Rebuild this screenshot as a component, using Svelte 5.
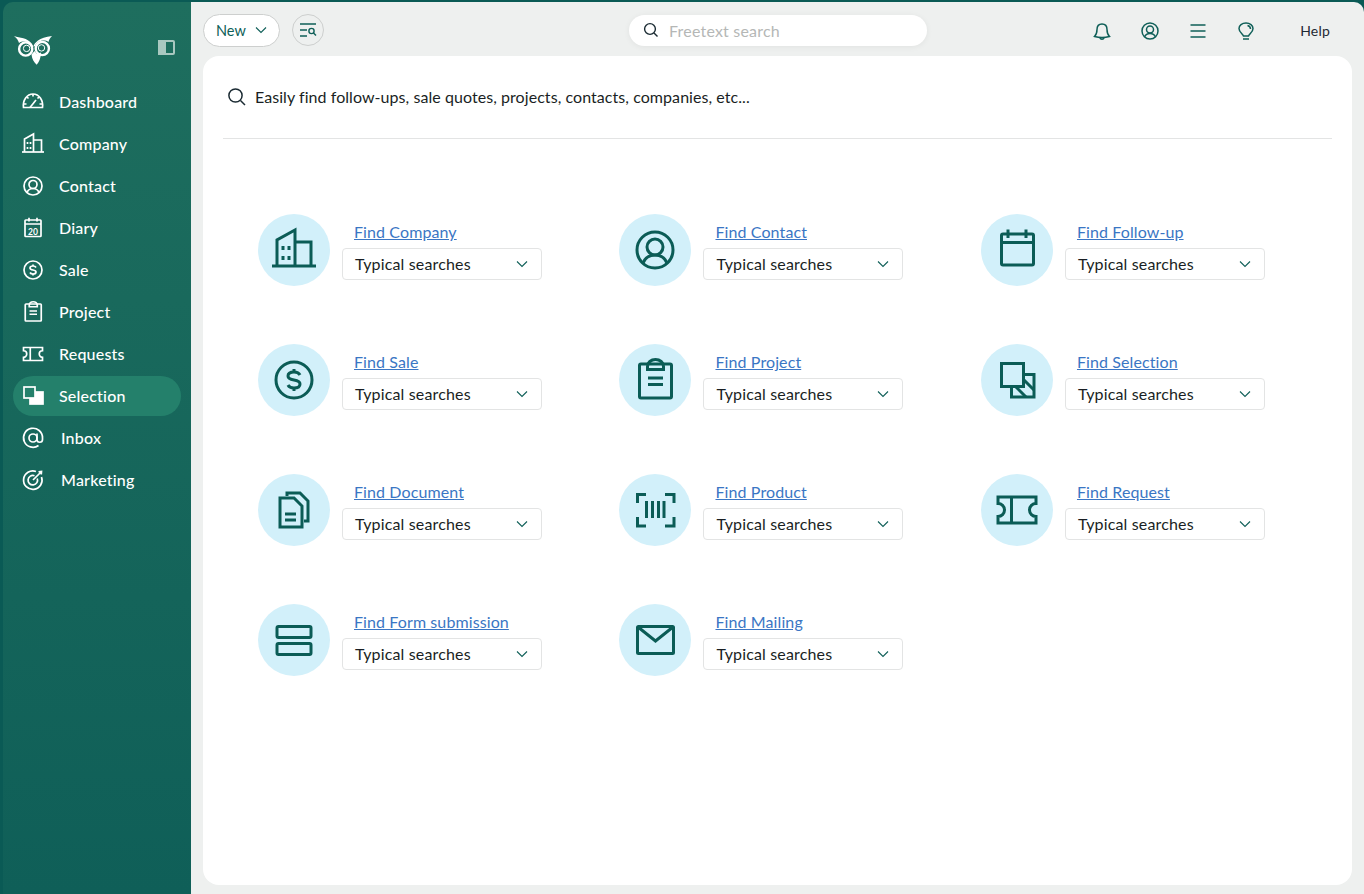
<script>
  const shapes = {
    gauge: `<path d="M5 35 C3 20 12 8 24 8 S45 20 43 35 Z"/><path d="M18 35 L30 20"/><path d="M24 8 V13 M12 14 L15 17 M36 14 L33 17 M37 28 H42 M6 28 H11"/>`,
    company: `<path d="M2 40 H46"/><path d="M7 40 V14 L25 4 V40"/><path d="M25 16 H41 V40"/><path d="M13 20 V24 M19 20 V24 M13 30 V34 M19 30 V34"/>`,
    contact: `<circle cx="24" cy="24" r="18"/><circle cx="24" cy="21" r="8"/><path d="M12 37 C14 32 18 29 24 29 S34 32 36 37"/>`,
    calendar: `<rect x="8.5" y="8" width="32" height="31" rx="1.5"/><path d="M8.5 16.5 H40.5 M15 3.5 V12 M33 3.5 V12"/>`,
    diary: `<rect x="8" y="8" width="32" height="33" rx="1.5"/><path d="M8 16 H40 M16 3.5 V11 M32 3.5 V11"/><text x="24" y="37" text-anchor="middle" font-family="Lato, sans-serif" font-weight="700" font-size="17" fill="currentColor" stroke="none">20</text>`,
    sale: `<circle cx="24" cy="24" r="18"/><path d="M30 19 C29 17 27 16 24 16 C20.5 16 18 17.5 18 20 C18 22.5 20.5 23.4 24 24 S30 25.5 30 28 C30 30.5 27.5 32 24 32 C20.5 32 19 31 18 29"/><path d="M24 13 V16 M24 32 V35"/>`,
    project: `<rect x="8.5" y="8" width="32" height="34" rx="1.5"/><path d="M16.5 13.5 V10.5 C16.5 6.5 20 3.5 24.5 3.5 S32.5 6.5 32.5 10.5 V13.5 Z"/><path d="M17 22 H32 M17 28.5 H32"/>`,
    selection: `<path d="M31 18.5 H41 V41 H18.5 V31"/><rect x="8.5" y="7.5" width="22" height="23"/><path d="M23 31 L33 41 M31 24 L41 34"/>`,
    selectionFilled: `<rect x="18" y="16" width="26" height="24" fill="currentColor"/><rect x="6" y="6" width="22" height="22" fill="#24806b"/>`,
    document: `<path d="M17 10 V7 H30 L38 15 V35 H34"/><path d="M10 12 H24 L32 20 V41 H10 Z"/><path d="M15 28 H26 M15 34 H26"/>`,
    product: `<path d="M15 8.5 H6.5 V17 M34 8.5 H43 V17 M6.5 31 V40 H15 M43 31 V40 H34"/><path d="M15.5 15 V32 M21.5 15 V32 M27.5 15 V32 M33 15 V32"/>`,
    request: `<path d="M5 11 H43 V17.5 A6.5 6.5 0 0 0 43 30.5 V37 H5 V30.5 A6.5 6.5 0 0 0 5 17.5 Z"/><path d="M18.5 11 V37"/>`,
    form: `<rect x="7" y="10.5" width="34" height="11" rx="1.5"/><rect x="7" y="27.5" width="34" height="11" rx="1.5"/>`,
    mail: `<rect x="6.5" y="10.5" width="36" height="27" rx="1"/><path d="M7 11 L24.5 25 L42 11"/>`,
    inbox: `<circle cx="24" cy="24" r="8"/><path d="M32 15 V27 A5.5 5.5 0 0 0 43 27 V24 A19 19 0 1 0 35 39"/>`,
    marketing: `<path d="M30 7 A18.5 18.5 0 1 0 41 18"/><path d="M27 15.5 A9.5 9.5 0 1 0 32.5 21"/><path d="M24 24 L41 7 M35 7.5 L41 7 L40.5 13"/>`
  };

  const nav = [
    { label: 'Dashboard', icon: 'gauge' },
    { label: 'Company', icon: 'company' },
    { label: 'Contact', icon: 'contact' },
    { label: 'Diary', icon: 'diary' },
    { label: 'Sale', icon: 'sale' },
    { label: 'Project', icon: 'project' },
    { label: 'Requests', icon: 'request' },
    { label: 'Selection', icon: 'selectionFilled', active: true },
    { label: 'Inbox', icon: 'inbox', wide: true },
    { label: 'Marketing', icon: 'marketing', wide: true }
  ];

  const finders = [
    { label: 'Find Company', icon: 'company' },
    { label: 'Find Contact', icon: 'contact' },
    { label: 'Find Follow-up', icon: 'calendar' },
    { label: 'Find Sale', icon: 'sale' },
    { label: 'Find Project', icon: 'project' },
    { label: 'Find Selection', icon: 'selection' },
    { label: 'Find Document', icon: 'document' },
    { label: 'Find Product', icon: 'product' },
    { label: 'Find Request', icon: 'request' },
    { label: 'Find Form submission', icon: 'form' },
    { label: 'Find Mailing', icon: 'mail' }
  ];
</script>

<div class="app">
  <aside class="sidebar">
    <div class="brand">
      <svg class="owl" width="38" height="30" viewBox="0 0 38 30" aria-label="Logo">
        <path class="owl-fill" d="M0 1 C6 3.5 13 2 18 9 C18.6 10 19 11 19.3 12 C20 8 25 2.5 38 1 C35.5 3.5 35 5 34.5 7 C31 4.5 24 5 21 11 L18 12 C15 6 9 5.5 5 8 C4 5 3 3.5 0 1 Z" />
        <circle class="owl-ring" cx="11.7" cy="14" r="6.6" />
        <circle class="owl-ring" cx="28.3" cy="13.5" r="6.6" />
        <circle class="owl-thin" cx="12.6" cy="13.4" r="3.2" />
        <circle class="owl-thin" cx="27.5" cy="12.9" r="3.2" />
        <path class="owl-fill" d="M17.5 19.5 L20.5 16 L23 19 L27 17.5 C27 23 25 27 22.7 29.7 C20 27.5 18 24 17.5 19.5 Z" />
      </svg>
      <svg class="toggle" width="17" height="15" viewBox="0 0 17 15">
        <rect x="0" y="0" width="8" height="15" fill="#a9c8c0" />
        <rect x="1" y="1" width="15" height="13" rx="1" fill="none" stroke="#a9c8c0" stroke-width="2" />
      </svg>
    </div>
    <nav class="nav">
      {#each nav as item}
        <a class="nav-item" class:active={item.active} class:wide={item.wide} href="#top">
          <svg class="nav-icon" viewBox="0 0 48 48">{@html shapes[item.icon]}</svg>
          <span>{item.label}</span>
        </a>
      {/each}
    </nav>
  </aside>

  <main class="main">
    <header class="topbar">
      <div class="top-left">
        <button class="new-btn">
          New
          <svg width="12" height="8" viewBox="0 0 12 8"><path d="M1 1.5 L6 6.5 L11 1.5" /></svg>
        </button>
        <button class="round-btn" aria-label="Search list">
          <svg width="18" height="14" viewBox="0 0 18 14">
            <path d="M1 1 H17 M1 7 H8 M1 13 H8" />
            <circle cx="12.5" cy="8" r="2.6" />
            <path d="M14.5 10 L17 12.5" />
          </svg>
        </button>
      </div>
      <div class="search">
        <svg class="search-icon" width="16" height="16" viewBox="0 0 16 16">
          <circle cx="7" cy="7" r="5.4" />
          <path d="M11 11 L14.5 14.5" />
        </svg>
        <span>Freetext search</span>
      </div>
      <div class="top-right">
        <svg class="top-icon" viewBox="0 0 24 24">
          <path d="M4.5 17.5 C6 16 7 14 7 10.5 C7 7 9 5 12 5 S17 7 17 10.5 C17 14 18 16 19.5 17.5 C15.5 18.7 8.5 18.7 4.5 17.5 Z" />
          <path d="M10 19 C10.5 20.6 13.5 20.6 14 19" />
        </svg>
        <svg class="top-icon" viewBox="0 0 24 24">
          <circle cx="12" cy="12" r="8" />
          <circle cx="12" cy="10.5" r="3.5" />
          <path d="M6.5 18 C7.5 15.5 9.5 14.5 12 14.5 S16.5 15.5 17.5 18" />
        </svg>
        <svg class="top-icon" viewBox="0 0 24 24">
          <path d="M4.5 6 H19.5 M4.5 12 H19.5 M4.5 18 H19.5" />
        </svg>
        <svg class="top-icon" viewBox="0 0 24 24">
          <path d="M9.5 17 C9 15 5 13.5 5 9.5 C5 6.5 8 4 12 4 S19 6.5 19 9.5 C19 13.5 15 15 14.5 17 Z" />
          <path d="M9 20 H15 M13.5 6.5 C15.5 7 16.5 8.5 16.5 10" />
        </svg>
        <span class="help">Help</span>
      </div>
    </header>

    <section class="card">
      <div class="card-head">
        <svg class="head-icon" width="20" height="20" viewBox="0 0 20 20">
          <circle cx="8.5" cy="8.5" r="6.6" />
          <path d="M13.5 13.5 L18 18" />
        </svg>
        <span>Easily find follow-ups, sale quotes, projects, contacts, companies, etc...</span>
      </div>
      <div class="grid">
        {#each finders as finder}
          <div class="finder">
            <div class="bubble">
              <svg class="big-icon" viewBox="0 0 48 48">{@html shapes[finder.icon]}</svg>
            </div>
            <div class="finder-body">
              <a class="finder-link" href="#top">{finder.label}</a>
              <div class="dropdown">
                <span>Typical searches</span>
                <svg width="12" height="8" viewBox="0 0 12 8"><path d="M1 1.5 L6 6.5 L11 1.5" /></svg>
              </div>
            </div>
          </div>
        {/each}
      </div>
    </section>
  </main>
</div>

<style>
  :global(body) {
    margin: 0;
    background: #0a5a55;
    font-family: Lato, "Liberation Sans", sans-serif;
  }

  .app {
    display: flex;
    height: 892px;
    padding: 2px 0 0 3px;
    background: #0a5a55;
    overflow: hidden;
  }

  .sidebar {
    width: 188px;
    flex: none;
    border-top-left-radius: 10px;
    background: linear-gradient(180deg, #1e6e5e 0%, #0f5f58 100%);
  }

  .brand {
    display: flex;
    align-items: center;
    justify-content: space-between;
    height: 80px;
    padding: 10px 16px 0 11px;
    box-sizing: border-box;
  }

  .owl { margin-top: 6px; }
  .owl-fill { fill: #fff; }
  .owl-ring { fill: none; stroke: #fff; stroke-width: 2.4; }
  .owl-thin { fill: none; stroke: #fff; stroke-width: 1; }

  .nav {
    display: flex;
    flex-direction: column;
    gap: 2px;
    padding: 0 10px;
  }

  .nav-item {
    display: flex;
    align-items: center;
    gap: 14px;
    height: 40px;
    padding-left: 8px;
    border-radius: 20px;
    color: #fff;
    font-size: 16px;
    font-weight: 500;
    letter-spacing: 0.2px;
    text-decoration: none;
  }

  .nav-item span { margin-bottom: 2px; }
  .nav-item.active { background: #24806b; }
  .nav-item.wide { gap: 16px; }

  .nav-icon {
    width: 24px;
    height: 24px;
    flex: none;
    color: #fff;
    fill: none;
    stroke: currentColor;
    stroke-width: 3.4;
  }

  .main {
    flex: 1;
    display: flex;
    flex-direction: column;
    min-width: 0;
    padding: 0 12px 9px;
    border-top-right-radius: 10px;
    background: #eef0ef;
  }

  .topbar {
    display: grid;
    grid-template-columns: 426px 298px 1fr;
    align-items: center;
    height: 54px;
    padding-top: 2px;
    box-sizing: border-box;
    flex: none;
  }

  .top-left {
    display: flex;
    align-items: center;
    gap: 12px;
  }

  button {
    font-family: inherit;
    cursor: pointer;
  }

  .new-btn {
    display: flex;
    align-items: center;
    gap: 9px;
    width: 77px;
    height: 33px;
    padding: 0 0 0 12px;
    border: 1px solid #cdcfce;
    border-radius: 17px;
    background: #fff;
    color: #0f5f58;
    font-size: 14.5px;
  }

  .new-btn path, .dropdown path {
    fill: none;
    stroke: #0f5f58;
    stroke-width: 1.1;
  }

  .round-btn {
    display: flex;
    align-items: center;
    justify-content: center;
    width: 32px;
    height: 32px;
    padding: 0;
    border: 1px solid #cdcfce;
    border-radius: 50%;
    background: #eef0ef;
  }

  .round-btn path, .round-btn circle {
    fill: none;
    stroke: #0f5f58;
    stroke-width: 1.4;
  }

  .search {
    display: flex;
    align-items: center;
    gap: 10px;
    height: 31px;
    padding-left: 14px;
    border-radius: 16px;
    background: #fff;
    color: #b5b7b6;
    font-size: 16px;
    letter-spacing: 0.2px;
    box-shadow: 0 1px 6px rgba(0, 0, 0, 0.06);
  }

  .search-icon circle, .search-icon path {
    fill: none;
    stroke: #1b2b33;
    stroke-width: 1.4;
  }

  .top-right {
    display: flex;
    align-items: center;
    justify-content: flex-end;
    gap: 24px;
    padding: 2px 22px 0 0;
  }

  .top-icon {
    width: 24px;
    height: 24px;
    fill: none;
    stroke: #0f5f58;
    stroke-width: 1.5;
  }

  .help {
    margin: 0 0 2px 18px;
    color: #1f2933;
    font-size: 14px;
    letter-spacing: 0.2px;
  }

  .card {
    flex: 1;
    padding: 0 20px;
    border-radius: 16px;
    background: #fff;
  }

  .card-head {
    display: flex;
    align-items: center;
    gap: 8px;
    height: 82px;
    padding-left: 4px;
    border-bottom: 1px solid #e3e4e4;
    color: #1a1f24;
    font-size: 16px;
    letter-spacing: 0.06px;
  }

  .card-head span { margin-bottom: 2px; }

  .head-icon circle, .head-icon path {
    fill: none;
    stroke: #1b2b33;
    stroke-width: 1.5;
  }

  .grid {
    display: grid;
    grid-template-columns: repeat(3, 361.49px);
    grid-auto-rows: 72px;
    row-gap: 58px;
    margin: 75px 0 0 35px;
  }

  .finder {
    display: flex;
    gap: 12px;
  }

  .bubble {
    display: flex;
    align-items: center;
    justify-content: center;
    width: 72px;
    height: 72px;
    flex: none;
    border-radius: 50%;
    background: #d2f0fa;
  }

  .big-icon {
    width: 48px;
    height: 48px;
    fill: none;
    stroke: #0b5c56;
    stroke-width: 3;
  }

  .finder-body {
    display: flex;
    flex-direction: column;
    align-items: flex-start;
    gap: 4px;
    padding-top: 6px;
  }

  .finder-link {
    margin-left: 12px;
    color: #3a76c4;
    font-size: 16px;
    letter-spacing: 0.1px;
    line-height: 24px;
  }

  .dropdown {
    display: flex;
    align-items: center;
    justify-content: space-between;
    width: 200px;
    height: 32px;
    padding: 0 13px 0 12px;
    box-sizing: border-box;
    border: 1px solid #e3e4e4;
    border-radius: 4px;
    background: #fff;
    color: #1a1f24;
    font-size: 16px;
    letter-spacing: 0.15px;
  }

  .dropdown span { margin-bottom: 2px; }
</style>
